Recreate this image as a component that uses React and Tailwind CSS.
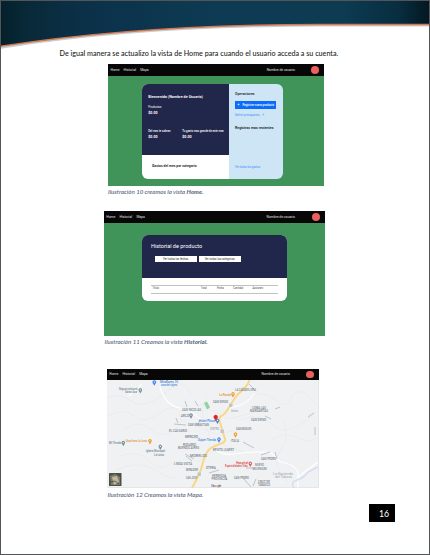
import React from 'react';

function Nav({ className, links, user, dot }) {
  return (
    <div className={`flex shrink-0 items-center bg-[#070707] text-[3.35px] leading-none text-[#e0e0e0] ${className}`}>
      <div className={`flex pt-[1px] ${links}`}>
        <span>Home</span>
        <span>Historial</span>
        <span>Mapa</span>
      </div>
      <span className={`ml-auto pt-[1px] whitespace-nowrap ${user}`}>Nombre de usuario</span>
      <span className={`size-[7.6px] rounded-full bg-[#e9605d] ${dot}`} />
    </div>
  );
}

function HomeView() {
  return (
    <section className="ml-[107px] h-[122px] w-[216px] bg-[#40945a]">
      <Nav className="h-[11.5px] pl-[2.5px]" links="gap-[4.1px]" user="mr-[16.4px]" dot="mr-[5px]" />
      <div className="mt-[8.5px] ml-[34px] flex h-[94.7px] w-[140.5px] overflow-hidden rounded-[6px] text-[3.7px] leading-none whitespace-nowrap">
        <div className="flex w-[87.3px] shrink-0 flex-col bg-white">
          <div className="h-[71px] bg-[#21264b] pt-[11px] pl-[6.3px] text-white">
            <div className="text-[3.75px] leading-[4px] font-semibold">Bienvenido (Nombre de Usuario)</div>
            <div className="mt-[5.7px] text-[2.9px] leading-[4px]">Productos</div>
            <div className="mt-[2.5px] text-[3.6px] leading-[4px] font-bold">$0.00</div>
            <div className="mt-[14px] flex text-[2.75px] leading-[4px] font-medium">
              <span className="w-[34px]">Del mes te sobran</span>
              <span>Tu gasto mas grande de este mes</span>
            </div>
            <div className="mt-[2.2px] flex text-[3.6px] leading-[4px] font-bold">
              <span className="w-[34px]">$0.00</span>
              <span>$0.00</span>
            </div>
          </div>
          <div className="pt-[9.4px] pl-[10px] text-[3.4px] leading-[4px] font-semibold text-[#151515]">Gastos del mes por categoria</div>
        </div>
        <div className="grow bg-[#cee5f5] pt-[8.2px] pl-[5.7px] text-[#1b2430]">
          <div className="text-[3.5px] leading-[4px] font-medium">Operaciones</div>
          <div className="mt-[5.2px] flex h-[8px] w-[41px] items-center gap-[3px] bg-[#0b6bfa] pl-[2.3px] text-[2.8px] font-medium text-white">
            <span className="text-[4px]">+</span>
            <span>Registrar nuevo producto</span>
          </div>
          <div className="mt-[3.5px] flex gap-[3px] text-[2.85px] leading-[4px] text-[#438df5]">
            <span>Definir presupuesto</span>
            <span>+</span>
          </div>
          <div className="mt-[9.5px] text-[3.55px] leading-[4px] font-semibold">Registros mas recientes</div>
          <div className="mt-[34.5px] text-[2.75px] leading-[4px] text-[#438df5]">Ver todos los gastos</div>
        </div>
      </div>
    </section>
  );
}

function HistoryView() {
  return (
    <section className="ml-[103px] h-[125px] w-[221px] bg-[#40945a]">
      <Nav className="h-[11.7px] pl-[2.3px]" links="gap-[4.3px]" user="mr-[17.3px]" dot="mr-[5.2px]" />
      <div className="mt-[12.3px] ml-[38.3px] h-[65.8px] w-[144.7px] overflow-hidden rounded-[6px] bg-white whitespace-nowrap">
        <div className="h-[43px] bg-[#21264b] pt-[8px] pl-[8.7px]">
          <div className="text-[5.5px] leading-[7px] text-white">Historial de producto</div>
          <div className="mt-[6px] ml-[3.7px] flex gap-[2px] text-center text-[2.8px] leading-[6px] text-[#333]">
            <div className="h-[6px] w-[42px] bg-white">Ver todas las fechas</div>
            <div className="h-[6px] w-[42px] bg-white">Ver todas las categorias</div>
          </div>
        </div>
        <div className="mt-[7px] ml-[8.7px] flex h-[9px] w-[127.5px] items-center border-y border-[#c2c2c2] text-[2.55px] leading-none text-[#444]">
          <span className="w-[50px] pl-[1.5px]">Titulo</span>
          <span className="w-[16px]">Total</span>
          <span className="w-[16px]">Fecha</span>
          <span className="w-[19.5px]">Cantidad</span>
          <span>Acciones</span>
        </div>
      </div>
    </section>
  );
}

const labels = [
  [53, 13.7, 18, 'Miraflores 10', '#4285dc'],
  [54, 16.9, 16, 'casa del viajero', '#4285dc'],
  [12, 21.2, 18.5, 'Negocio artesanal', '#72858e'],
  [18, 24.4, 12, 'Santa Ana', '#72858e'],
  [75, 42.2, 19, 'SAN NICOLAS', '#77818a'],
  [74, 47.5, 8, 'ARCO', '#77818a'],
  [81, 57.3, 21, 'SAN SEBASTIAN', '#77818a'],
  [62, 62.6, 18, 'EL CALVARIO', '#77818a'],
  [78, 68.7, 13, 'MERCED', '#77818a'],
  [76, 76.7, 13, 'ROSARIO', '#77818a'],
  [71, 79.9, 21, 'BUENOS AIRES', '#77818a'],
  [83, 87.7, 17, 'MORELOS', '#77818a'],
  [67, 96, 18, 'LINDA VISTA', '#77818a'],
  [79, 102, 12, 'MIRADOR', '#77818a'],
  [79, 109.8, 11, 'SAN JOSE', '#77818a'],
  [2, 75.3, 12, 'Mi Tienda', '#72858e'],
  [19, 73.2, 21, 'Gasolinera La Loma', '#db9140'],
  [39, 83.4, 19, 'Iglesia Municipal', '#72858e'],
  [47, 86.6, 10, 'La Loma', '#72858e'],
  [128, 22.2, 21, 'LA CAÑADILLERA', '#77818a'],
  [112, 26.8, 12, 'La Ronda', '#db9140'],
  [106, 33.6, 15, 'SAN DIEGO', '#77818a'],
  [124, 42.8, 7, 'Centro', '#a0a5aa'],
  [145, 39.8, 14, 'LOMA LAS', '#77818a'],
  [143, 43.1, 18, 'MARGARITAS', '#77818a'],
  [144, 51.8, 15, 'SAN DIEGO', '#77818a'],
  [129, 61.3, 16, 'SAN MIGUEL', '#77818a'],
  [92, 53, 16, 'Hotel Plaza', '#4285dc'],
  [103, 60.5, 9, 'CENTRO', '#a0a5aa'],
  [91, 71.8, 18, 'Super Tienda', '#4285dc'],
  [124, 73.3, 8, 'ITALIA', '#77818a'],
  [106, 81.5, 21, 'BENITO JUAREZ', '#77818a'],
  [154, 90.7, 15, 'SAN PEDRO', '#77818a'],
  [129, 94.7, 12, 'Hospital', '#da4545'],
  [118, 97.9, 22.5, 'Especialidades Vida', '#da4545'],
  [148, 97.3, 9, 'NUEVO', '#77818a'],
  [145.5, 100.5, 14, 'MILENIUM', '#77818a'],
  [105, 108.1, 14, 'HERMOSA', '#77818a'],
  [104.5, 111.3, 15.5, 'PROVINCIA', '#77818a'],
  [127, 109.6, 15, 'SAN PEDRO', '#77818a'],
  [151, 114.1, 12, 'CRUZ DE', '#77818a'],
  [151, 117.3, 12, 'TABASCO', '#77818a'],
  [99, 100.3, 10, 'OTERA', '#77818a'],
  [166, 105.7, 20, 'La Hacienda', '#b2b5b9'],
  [168, 108.9, 17, 'del Tabaco', '#b2b5b9'],
];

const pins = [
  [47.3, 13.7, '#4285f4'], [33.3, 21.5, '#78909a'], [84, 46.7, '#78909a'],
  [16.3, 74.2, '#78909a'], [43, 72.4, '#f09b2b'], [53.3, 78, '#78909a'],
  [126, 25.5, '#f09b2b'], [110.5, 52, '#4285f4'], [128.5, 65.8, '#f09b2b'],
  [112, 70.8, '#4285f4'], [143.3, 95, '#e95e5e'],
];

function MapView() {
  return (
    <section className="ml-[106px] flex h-[119px] w-[212px] flex-col">
      <Nav className="h-[11px] pl-[2.3px]" links="gap-[4.2px]" user="mr-[16.2px]" dot="mr-[5.3px]" />
      <svg className="block h-[108px] w-[212px]" viewBox="0 11 212 108" fontFamily="Roboto, Liberation Sans, sans-serif">
        <rect y="11" width="212" height="108" fill="#eff1f3" />
        <g fill="none" stroke="#e5e8eb" strokeWidth=".6">
          <path d="M0 29q13-6 23 2t23 1 21-15 18 9" />
          <path d="M0 47q17-9 27 0t28-4 19 11M16 61q17-12 29 0t29-7" />
          <path d="M142 29q16-9 26 2t17-3 24 8M132 51q22-8 34 5t39-9" />
          <path d="M11 88q20-9 31 4t28-1M7 102q24-12 41-1t22 7" />
          <path d="M164 71q14-9 27-2t19-2M177 53q6 15-4 29t8 31" />
          <path d="M100 26q-10 18 0 34t-9 33M92 34l29 16 33-8M75 51l34 14 31-5M79 67l28 5 32 12" />
        </g>
        <g fill="none" stroke="#fff" strokeWidth="1.1">
          <path d="M22 27l13-12M53 18q5 18 20 21t24 16" />
          <path d="M114 49q7-11 16-12t18-13M106 79q9 8 22 6t25-2 15 4q3 6 10 7t13 8v17M191 108l20-15" />
        </g>
        <g fill="none" stroke="#b4bac0" strokeWidth=".85">
          <path d="M88 32l3 5M93 51l-3 6M80 38l-2-6M78 85l9 5m-8-3l6 5M67 55l12 1M69 49l2 5" />
          <path d="M142 15l5 5M168 40l5-2M158 47l6 3M201 48l6-4M208 58v8" />
          <path d="M136 73l11 6M154 86l9-3m5 0l2 7M118 106l2 5m16-2l8 9M112 101l-10 3M139 99h7M149 110l-3 7" />
        </g>
        <path d="M97 34l3-1.5 3 6-3 2z" fill="#91d4a2" />
        <path d="M187 119q-4-6 3-8t11-8l10-5" fill="none" stroke="#d0dff1" strokeWidth="1.4" />
        <path d="M142.500 11q-2 6-8 11t-11 14-9 11-1 8l2 7 2.500 8q1 3-5 5t-9 4-5 6-4 12-10 22" fill="none" stroke="#f9d784" strokeWidth="2" strokeLinejoin="round" />
        <g fill="#c1c5c9">
          <rect x="122" y="34.500" width="3.400" height="3.400" rx=".7" />
          <rect x="113.500" y="60.500" width="3.400" height="3.400" rx=".7" />
          <rect x="90.500" y="103.500" width="3.400" height="3.400" rx=".7" />
        </g>
        {labels.map(([x, y, w, text, color], i) => (
          <text key={i} x={x} y={y} textLength={w} lengthAdjust="spacingAndGlyphs" fontSize="2.75" fontWeight="500" fill={color}>{text}</text>
        ))}
        {pins.map(([x, y, color], i) => (
          <g key={i}>
            <path d={`M${x} ${y + 3}l-1.3-2.3a1.8 1.8 0 1 1 2.6 0z`} fill={color} />
            <circle cx={x} cy={y - 0.6} r=".65" fill="#fff" />
          </g>
        ))}
        <path d="M108.700 52.600q-.3-1.600-1.600-3a2.200 2.200 0 1 1 3.200 0q-1.300 1.400-1.600 3" fill="#e52b2b" />
        <circle cx="108.700" cy="48.200" r=".6" fill="#941f1f" />
        <rect x="2" y="104" width="12.500" height="13" rx=".6" fill="#4c5048" />
        <path d="M3 107l5-2 5 3v8H4z" fill="#7d7c6a" />
        <path d="M5 108l5-1 2 6-5 3z" fill="#c0b79b" />
        <path d="M3 113l5-1 4 3" fill="none" stroke="#373d37" strokeWidth=".7" />
        <text x="104" y="117.500" textLength="10.500" fontSize="4" fontWeight="500">
          <tspan fill="#4285f4">G</tspan><tspan fill="#ea4335">o</tspan><tspan fill="#e6ad08">o</tspan><tspan fill="#4285f4">g</tspan><tspan fill="#34a853">l</tspan><tspan fill="#ea4335">e</tspan>
        </text>
        <path d="M0 118.700h211.700V11" fill="none" stroke="#d7d9dc" strokeWidth=".5" />
      </svg>
    </section>
  );
}

function Caption({ className, children }) {
  return (
    <p className={`h-[8px] leading-[8px] font-semibold whitespace-nowrap text-[#5d6d84] italic ${className}`}>{children}</p>
  );
}

export default function App() {
  return (
    <main className="flex h-[555px] w-[430px] flex-col overflow-hidden border border-[#535558] bg-white font-[Roboto,'Liberation_Sans',sans-serif]">
      <svg className="block h-[49px] w-[428px] shrink-0" viewBox="1 1 428 49">
        <defs>
          <linearGradient id="sea">
            <stop offset="0" stopColor="#04202b" />
            <stop offset=".06" stopColor="#082938" />
            <stop offset=".2" stopColor="#0b3149" />
            <stop offset=".5" stopColor="#0d3b53" />
            <stop offset=".8" stopColor="#0c3b52" />
            <stop offset=".93" stopColor="#082d3f" />
            <stop offset="1" stopColor="#031720" />
          </linearGradient>
        </defs>
        <path d="M0 47.9Q140 25.7 320 25.7H430" fill="none" stroke="#c9cdd1" strokeWidth="1.8" />
        <path d="M0 46.5Q140 24.500 320 24.500H430V0H0z" fill="url(#sea)" />
        <path d="M0 46.5Q140 24.500 320 24.500H430" fill="none" stroke="#d17850" strokeWidth="1.5" />
      </svg>
      <p className="ml-[58.5px] h-[14px] shrink-0 font-[Lato,'Open_Sans',sans-serif] text-[7.17px] leading-[8px] font-medium whitespace-nowrap text-[#242424]">
        De igual manera se actualizo la vista de Home para cuando el usuario acceda a su cuenta.
      </p>
      <div className="shrink-0"><HomeView /></div>
      <Caption className="mt-[2px] ml-[107px] shrink-0 font-[Lato,sans-serif] text-[6.1px]">Ilustración 10 creamos la vista <b>Home.</b></Caption>
      <div className="mt-[15px] shrink-0"><HistoryView /></div>
      <Caption className="mt-[2px] ml-[103.5px] shrink-0 font-[Lato,sans-serif] text-[6.1px]">Ilustración 11 Creamos la vista <b>Historial.</b></Caption>
      <div className="mt-[23px] shrink-0"><MapView /></div>
      <Caption className="mt-[3px] ml-[106.5px] shrink-0 font-[Lato,sans-serif] text-[6.1px]">Ilustración 12 Creamos la vista Mapa.</Caption>
      <div className="mt-[5px] ml-[368px] flex h-[18px] w-[26px] shrink-0 items-center bg-black pt-[3px] pl-[10px] font-[Lato,sans-serif] text-[8.7px] leading-none text-white">16</div>
    </main>
  );
}
